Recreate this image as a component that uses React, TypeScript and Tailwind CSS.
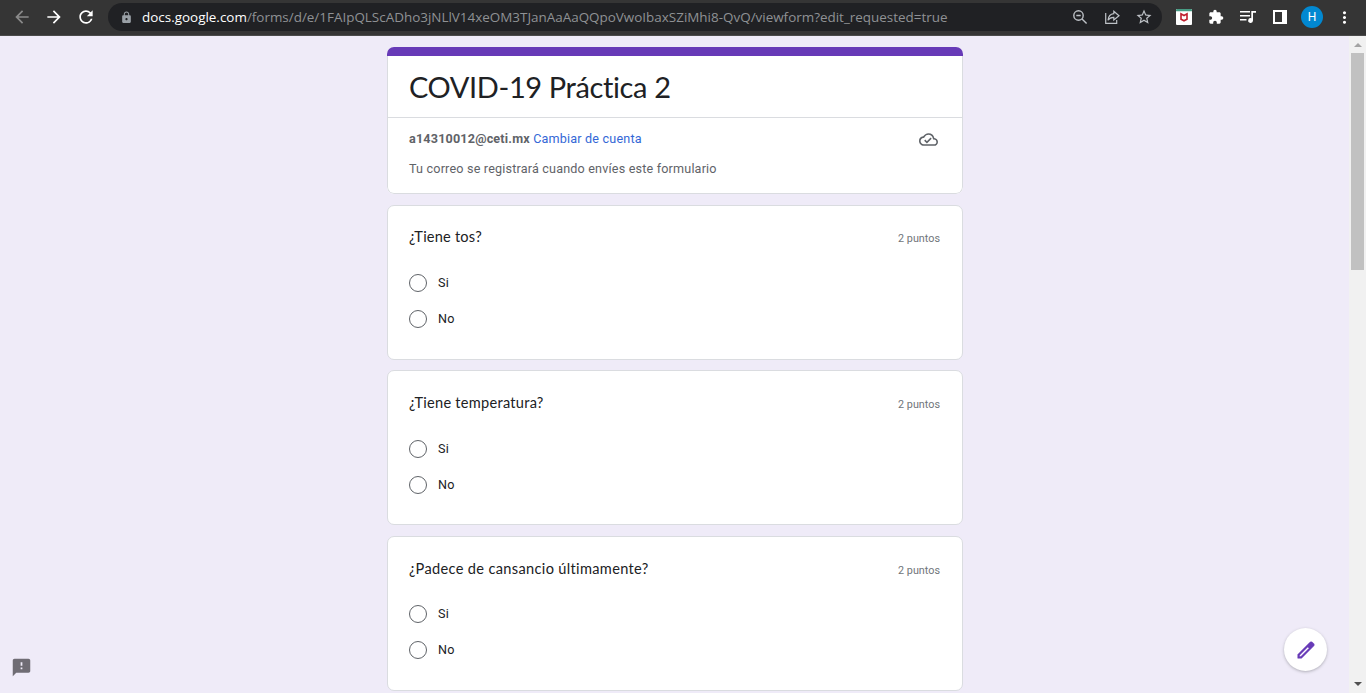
import React from "react";
import {
  MdArrowBack,
  MdArrowForward,
  MdRefresh,
  MdLock,
  MdStarBorder,
  MdExtension,
  MdMoreVert,
  MdOutlineCloudDone,
  MdFeedback,
} from "react-icons/md";

type Question = {
  title: string;
  titleSpacing: string;
  card: string;
  head: string;
  options: string;
};

const questions: Question[] = [
  { title: "¿Tiene tos?", titleSpacing: "tracking-[0.2px]", card: "mt-[11px]", head: "mt-[21px]", options: "mt-[18px]" },
  { title: "¿Tiene temperatura?", titleSpacing: "tracking-[0.26px]", card: "mt-[10px]", head: "mt-[22px]", options: "mt-[18px]" },
  { title: "¿Padece de cansancio últimamente?", titleSpacing: "tracking-[0.33px]", card: "mt-[11px]", head: "mt-[22px]", options: "mt-[17px]" },
];

function Toolbar() {
  return (
    <header className="flex h-9 shrink-0 items-center border-b border-[#4a4a4a] bg-[#353535] text-white">
      <div className="flex w-[108px] items-center gap-[12px] pl-[12px] pb-px">
        <MdArrowBack size={20} color="#8a8a8a" />
        <MdArrowForward size={20} />
        <MdRefresh size={20} />
      </div>
      <div className="mb-px flex h-7 w-[1054px] items-center rounded-full bg-[#202124] pl-[12px] pr-[9px]">
        <MdLock size={13} color="#9aa0a6" />
        <div className="ml-[9px] flex-1 whitespace-nowrap font-['Open_Sans','Noto_Sans',sans-serif] text-[13.45px] leading-7 text-[#8f9194]">
          <span className="text-white">docs.google.com</span>
          <span>/forms/d/e/1FAIpQLScADho3jNLlV14xeOM3TJanAaAaQQpoVwoIbaxSZiMhi8-QvQ/viewform?edit_requested=true</span>
        </div>
        <div className="flex items-center gap-[14px] text-[#bdc1c6]">
          <svg width="18" height="18" viewBox="0 0 18 18" fill="none" stroke="currentColor" strokeWidth="1.4">
            <circle cx="7.500" cy="7.500" r="4.700" />
            <path d="M5.300 7.500h4.400M11 11l4.600 4.600" />
          </svg>
          <svg width="18" height="18" viewBox="0 0 18 18" fill="none" stroke="currentColor" strokeWidth="1.2">
            <path d="M2.700 5v10.300h11V12" />
            <path d="M10.800 3.200 16 7.700l-5.200 4.200V9.400C8.300 9.300 6.400 10.200 5 12.200c.4-3.600 2.200-6.100 5.800-6.500z" />
          </svg>
          <MdStarBorder size={18} />
        </div>
      </div>
      <div className="flex flex-1 items-center pb-px pl-[14px]">
        <svg width="16" height="16" viewBox="0 0 16 16">
          <rect width="16" height="16" rx="1" fill="#fff" />
          <path d="M0 1a1 1 0 0 1 1-1h14a1 1 0 0 1 1 1v1.200H0z" fill="#479c84" />
          <path d="M5 4.900v5.300l3 1.600 3-1.600V4.900L8 6.500z" fill="none" stroke="#c01f2e" strokeWidth="1.600" />
        </svg>
        <MdExtension className="ml-[16px]" size={16} />
        <svg className="ml-[16px]" width="16" height="14" viewBox="0 0 16 14" fill="#fff">
          <path d="M0 1h10v1.500H0zM0 5h10v1.500H0zM0 9h6.500v1.500H0zM11.300 1H16v1.700h-3V10.500a2.400 2.400 0 1 1-1.700-2.300z" />
        </svg>
        <svg className="ml-[17px]" width="14" height="14" viewBox="0 0 14 14">
          <path d="M0 0h14v14H0zM2 2v10h7V2z" fill="#fff" fillRule="evenodd" />
        </svg>
        <div className="ml-[14px] flex size-[22px] items-center justify-center rounded-full bg-[#0288d1] font-['Roboto',sans-serif] text-[12px]">H</div>
        <MdMoreVert className="ml-[12px]" size={19} />
      </div>
    </header>
  );
}

function Option({ label }: { label: string }) {
  return (
    <label className="flex h-9 items-center gap-[11px] text-[12.6px] tracking-[0.18px] text-[#202124]">
      <span className="size-[18px] rounded-full border border-[#5f6368]" />
      {label}
    </label>
  );
}

function QuestionCard({ q }: { q: Question }) {
  return (
    <section className={`h-[155px] shrink-0 rounded-[7px] border border-[#dadce0] bg-white px-[21px] ${q.card}`}>
      <div className={`flex h-5 items-center justify-between ${q.head}`}>
        <h2 className={`font-['Lato',sans-serif] text-[14.6px] text-[#202124] ${q.titleSpacing}`}>{q.title}</h2>
        <span className="mr-px mt-[5px] text-[10.8px] text-[#70757a]">2 puntos</span>
      </div>
      <div className={q.options}>
        <Option label="Si" />
        <Option label="No" />
      </div>
    </section>
  );
}

function Scrollbar() {
  return (
    <div className="flex w-[17px] shrink-0 flex-col items-center bg-[#f1f1f1]">
      <div className="flex h-[17px] items-center">
        <svg width="8" height="4" viewBox="0 0 8 4"><path d="M4 0 8 4H0z" fill="#a3a3a3" /></svg>
      </div>
      <div className="h-[217px] w-[13px] bg-[#c1c1c1]" />
      <div className="mt-auto flex h-[19px] items-center">
        <svg width="8" height="4" viewBox="0 0 8 4"><path d="M0 0h8L4 4z" fill="#505050" /></svg>
      </div>
    </div>
  );
}

export default function App() {
  return (
    <div className="flex h-[693px] w-[1366px] flex-col overflow-hidden bg-[#efebf8] font-['Roboto',sans-serif]">
      <Toolbar />
      <div className="relative flex min-h-0 flex-1">
        <main className="flex flex-1 flex-col overflow-hidden pl-[387px] pt-[11px]">
          <div className="flex w-[576px] flex-col">
            <section className="flex h-[147px] flex-col overflow-hidden rounded-[7px] bg-white">
              <div className="h-[9px] bg-[#673ab7]" />
              <div className="flex flex-1 flex-col rounded-b-[7px] border border-t-0 border-[#dadce0]">
                <div className="flex h-[62px] items-center border-b border-[#dadce0] px-[21px]">
                  <h1 className="whitespace-nowrap font-['Lato',sans-serif] text-[29px] leading-[36px] tracking-[-0.38px] text-[#202124]">COVID-19 Práctica 2</h1>
                </div>
                <div className="flex h-[31px] items-center justify-between px-[21px] pt-[11px] text-[12.6px] leading-5 tracking-[0.18px] text-[#5f6368]">
                  <p>
                    <span className="font-bold">a14310012@ceti.mx</span> <span className="text-[#3367d6]">Cambiar de cuenta</span>
                  </p>
                  <MdOutlineCloudDone className="mr-[3px]" size={19} />
                </div>
                <p className="mt-[10px] px-[21px] text-[12.6px] leading-5 tracking-[0.18px] text-[#5f6368]">
                  Tu correo se registrará cuando envíes este formulario
                </p>
              </div>
            </section>
            {questions.map((q) => (
              <QuestionCard key={q.title} q={q} />
            ))}
          </div>
        </main>
        <MdFeedback className="absolute left-[11px] top-[621px]" size={21} color="#6f6c74" />
        <button className="absolute left-[1284px] top-[592px] flex size-[43px] items-center justify-center rounded-full bg-white shadow-[0_1px_3px_rgba(60,64,67,0.35)]">
          <svg width="22" height="22" viewBox="0 0 24 24" fill="#673ab7">
            <path d="M20.410 4.940l-1.350-1.350c-.780-.780-2.050-.780-2.830 0L3 16.820V21h4.180L20.410 7.770c.790-.780.790-2.050 0-2.830zM6.410 19.060L5 19v-1.360l8.900-8.900 1.410 1.410-8.900 8.910z" stroke="#673ab7" strokeWidth="0.5" />
          </svg>
        </button>
        <Scrollbar />
      </div>
    </div>
  );
}
